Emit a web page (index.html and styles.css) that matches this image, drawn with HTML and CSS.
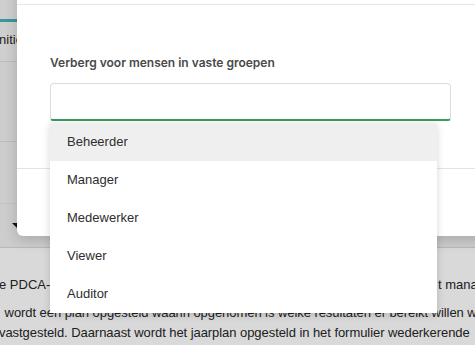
FILE: index.html
```html
<!DOCTYPE html>
<html lang="nl">
<head>
<meta charset="utf-8">
<title>Verberg voor mensen</title>
<link rel="stylesheet" href="styles.css">
</head>
<body>
<div class="page">
  <div class="tabs">
    <div class="tab">Definitie</div>
  </div>
  <div class="rows">
    <div class="row row-a"></div>
    <div class="row row-b"></div>
    <div class="row row-c"><span class="caret"></span></div>
  </div>
  <div class="text">
    <p class="line l1"><span class="clip">e PDCA-cyclus wordt toegepast binnen het kwaliteitsmanagement</span><span>t management</span></p>
    <p class="para">
      <span class="line l2">&nbsp;wordt een plan opgesteld waarin opgenomen is welke resultaten er bereikt willen worden</span>
      <span class="line l3">vastgesteld. Daarnaast wordt het jaarplan opgesteld in het formulier wederkerende</span>
    </p>
  </div>
</div>

<div class="modal">
  <div class="modal-head"></div>
  <div class="modal-body">
    <label class="label">Verberg voor mensen in vaste groepen</label>
    <div class="input"></div>
  </div>
  <div class="modal-foot"></div>
</div>

<ul class="dropdown">
  <li class="opt active">Beheerder</li>
  <li class="opt">Manager</li>
  <li class="opt">Medewerker</li>
  <li class="opt">Viewer</li>
  <li class="opt">Auditor</li>
</ul>
</body>
</html>
```
FILE: styles.css
```css
* { box-sizing: border-box; }
html, body {
  margin: 0;
  padding: 0;
  width: 475px;
  height: 345px;
  overflow: hidden;
}
body {
  background: #d9d9d9;
  font-family: "Liberation Sans", Arial, sans-serif;
  color: #1f1f1f;
  position: relative;
}
.page {
  width: 475px;
  overflow: hidden;
}
.tabs {
  background: #cfcfcf;
  padding-top: 19px;
  border-bottom: 1px solid #bdbdbd;
  height: 62px;
}
.tab {
  border-top: 3px solid #3a979c;
  width: 90px;
  margin-left: -24px;
  font-size: 13px;
  line-height: 36px;
  color: #1c1c1c;
  height: 39px;
}
.rows {
  background: #cdcdcd;
}
.row {
  border-bottom: 1px solid #bcbcbc;
}
.row-a { height: 80px; }
.row-b { height: 62px; border-bottom-color: #c3c3c3; }
.row-c {
  height: 44px;
  padding-top: 19px;
  padding-left: 12px;
  border-bottom-color: #b9b9b9;
}
.caret {
  display: block;
  width: 0;
  height: 0;
  border-left: 5px solid transparent;
  border-top: 5px solid #111;
}
.text {
  background: #d9d9d9;
  font-size: 13px;
  color: #202020;
}
.line {
  display: block;
  white-space: nowrap;
  margin: 0;
}
.l1 {
  display: grid;
  grid-template-columns: 439px auto;
  padding-top: 29px;
  line-height: 16px;
  margin-left: -1px;
}
.clip {
  overflow: hidden;
}
.para {
  margin: 10px 0 0;
  line-height: 20px;
  letter-spacing: -0.06px;
}
.l2 { margin-left: 1px; }
.l3 { margin-left: -1px; }

.modal {
  position: absolute;
  left: 17px;
  top: -20px;
  width: 480px;
  height: 256px;
  background: #fff;
  border-bottom-left-radius: 6px;
  box-shadow: 0 4px 14px rgba(0, 0, 0, 0.18);
  display: flex;
  flex-direction: column;
}
.modal-head {
  height: 25px;
  border-bottom: 1px solid #e6e6e6;
}
.modal-body {
  padding: 50px 0 0 33px;
  height: 164px;
  border-bottom: 1px solid #e3e3e3;
}
.label {
  display: block;
  font-family: Inter, "Liberation Sans", sans-serif;
  font-weight: 600;
  font-size: 12px;
  line-height: 16px;
  color: #4a4a4a;
}
.input {
  margin-top: 12px;
  width: 401px;
  height: 38px;
  border: 1px solid #dcdcdc;
  border-bottom: 2px solid #3c9a5a;
  border-radius: 4px 4px 3px 3px;
  background: #fff;
}
.modal-foot {
  flex: 1;
}
.dropdown {
  position: absolute;
  left: 50px;
  top: 123px;
  width: 387px;
  margin: 0;
  padding: 0;
  list-style: none;
  background: #fff;
  box-shadow: 0 2px 8px rgba(0, 0, 0, 0.16);
}
.opt {
  height: 38px;
  line-height: 38px;
  padding-left: 17px;
  font-size: 13px;
  color: #2e2e2e;
}
.opt.active {
  background: #efefef;
}
```
